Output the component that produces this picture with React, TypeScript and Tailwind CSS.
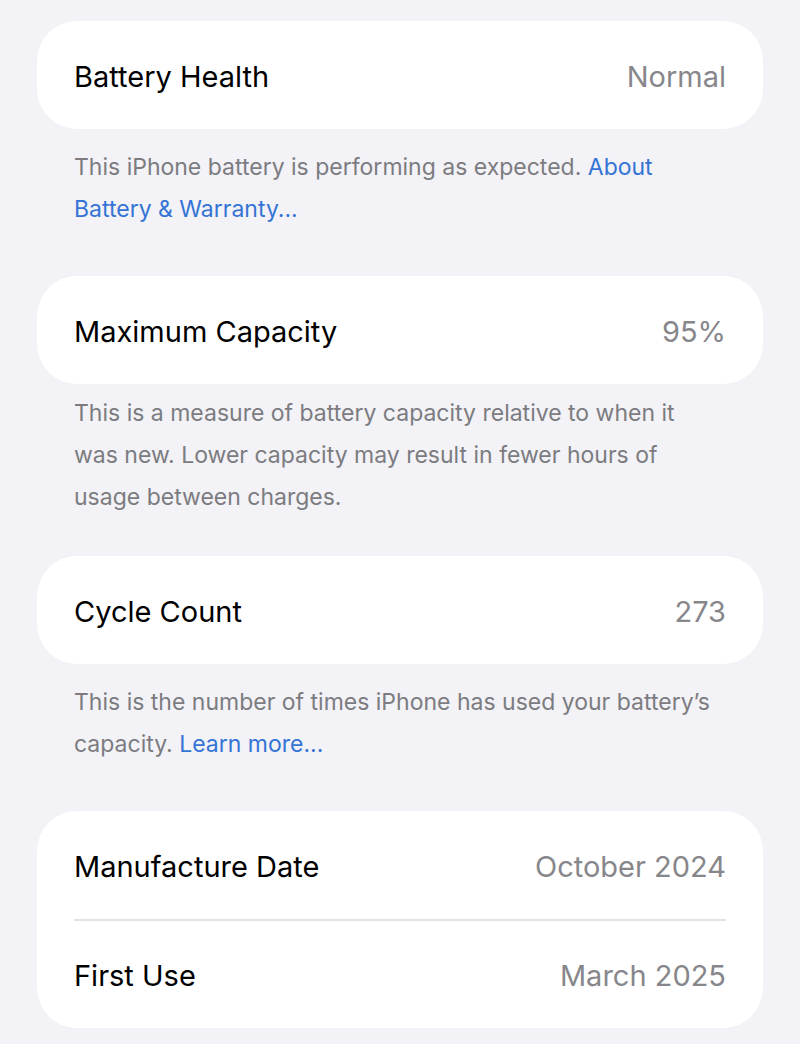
import * as React from "react";

type Row = { label: string; value: string };

function Card({ rows }: { rows: Row[] }) {
  return (
    <div className="bg-white rounded-[40px] px-[37px]">
      {rows.map((row, index) => (
        <div key={row.label}>
          {index > 0 && <div className="h-[2px] bg-[#e3e3e6]" />}
          <div
            className={
              index === 0
                ? "h-[108px] flex items-center justify-between"
                : "h-[107px] flex items-center justify-between"
            }
          >
            <span className="text-[29px] text-black pt-[3px]">{row.label}</span>
            <span className="text-[29px] text-[#87878b] pt-[3px]">
              {row.value}
            </span>
          </div>
        </div>
      ))}
    </div>
  );
}

function Footer({
  className,
  children,
}: {
  className: string;
  children: React.ReactNode;
}) {
  return (
    <p
      className={
        "pl-[37px] pr-[46px] text-[23px] leading-[42px] text-[#7c7c80] " +
        className
      }
    >
      {children}
    </p>
  );
}

export default function App() {
  return (
    <div
      className="min-h-[1044px] bg-[#f2f2f7] px-[37px] pt-[21px]"
      style={{ fontFamily: "Inter, 'Noto Sans', sans-serif" }}
    >
      <Card rows={[{ label: "Battery Health", value: "Normal" }]} />
      <Footer className="pt-[17px] pb-[46px]">
        This iPhone battery is performing as expected.{" "}
        <span className="text-[#3574d4]">About Battery &amp; Warranty...</span>
      </Footer>

      <Card rows={[{ label: "Maximum Capacity", value: "95%" }]} />
      <Footer className="pt-[8px] pb-[38px]">
        This is a measure of battery capacity relative to when it was new.
        Lower capacity may result in fewer hours of usage between charges.
      </Footer>

      <Card rows={[{ label: "Cycle Count", value: "273" }]} />
      <Footer className="pt-[17px] pb-[46px]">
        This is the number of times iPhone has used your battery’s capacity.{" "}
        <span className="text-[#3574d4]">Learn more...</span>
      </Footer>

      <Card
        rows={[
          { label: "Manufacture Date", value: "October 2024" },
          { label: "First Use", value: "March 2025" },
        ]}
      />
    </div>
  );
}
